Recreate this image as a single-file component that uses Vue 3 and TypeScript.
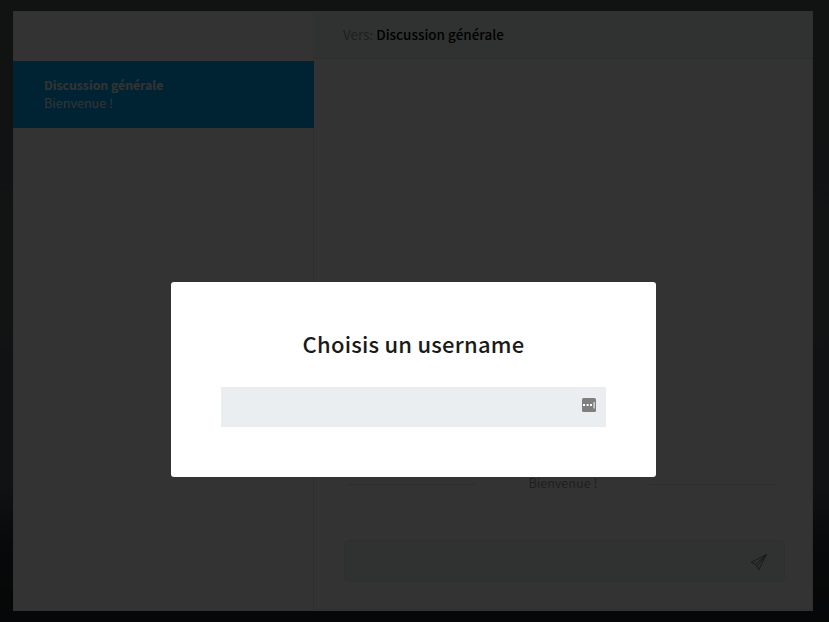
<script setup lang="ts">
import { ref } from 'vue'

interface Room {
  name: string
  preview: string
}

const rooms: Room[] = [{ name: 'Discussion générale', preview: 'Bienvenue !' }]
const active = ref<Room>(rooms[0])
const username = ref<string>('')
const message = ref<string>('')
</script>

<template>
  <div class="page">
    <main class="chat">
      <aside class="sidebar">
        <div v-for="room in rooms" :key="room.name" class="room">
          <strong class="room-name">{{ room.name }}</strong>
          <span class="room-preview">{{ room.preview }}</span>
        </div>
      </aside>
      <section class="conversation">
        <header class="top">
          <span>Vers:&nbsp;</span><b>{{ active.name }}</b>
        </header>
        <div class="messages">
          <div class="notice"><i></i><span>Bienvenue !</span><i></i></div>
        </div>
        <form class="write" @submit.prevent>
          <input v-model="message" type="text" />
          <svg class="send" viewBox="0 0 18 18">
            <path d="M16.4 1.6 1.2 9.4l4.3 2 3.2 5.4zM16.4 1.6 5.5 11.4M16.4 1.6 7 13.2" />
          </svg>
        </form>
      </section>
    </main>
    <div class="overlay">
      <form class="modal" @submit.prevent>
        <h1>Choisis un username</h1>
        <div class="field">
          <input v-model="username" type="text" />
          <svg class="key" viewBox="0 0 14 14">
            <rect width="14" height="14" rx="1.5" fill="#7f7f7f" />
            <path d="M1 6h2v2H1zM4.6 6h2v2h-2zM8 6h2v2H8zM11.6 4h1v6.5h-1z" fill="#fff" />
          </svg>
        </div>
      </form>
    </div>
  </div>
</template>

<style>
body {
  overflow: hidden;
  background: #000;
}
</style>

<style scoped>
* {
  box-sizing: border-box;
}
.page {
  width: 829px;
  height: 622px;
  padding: 11px 16px 11px 13px;
  background: linear-gradient(#555a5c 0%, #5a5f5f 45%, #555a60 78%, #282d30 88%, #202327 100%);
  font-family: 'Noto Sans CJK SC', 'Noto Sans', sans-serif;
  font-size: 12.6px;
  line-height: 18px;
}
.chat {
  display: flex;
  width: 800px;
  height: 600px;
  background: #fff;
}
.sidebar {
  width: 301px;
  padding-top: 49px;
  border: solid #f0f4f3;
  border-width: 1px 0 0 1px;
}
.room {
  position: relative;
  z-index: 1;
  display: flex;
  flex-direction: column;
  height: 67px;
  margin-left: -1px;
  padding: 15px 0 0 31px;
  background: #00b0ff;
  color: #fff;
}
.room-name {
  font-size: 12.25px;
  font-weight: 700;
}
.conversation {
  display: flex;
  flex: 1;
  flex-direction: column;
  height: 599px;
  margin-left: -1px;
  border: solid #e6eae9;
  border-width: 0 1px 1px;
}
.top {
  display: flex;
  height: 48px;
  padding: 14px 0 0 29px;
  border-bottom: 1px solid #e0e8e6;
  background: #eefaf6;
  color: #999;
  font-size: 13.5px;
}
.top b {
  color: #000;
  font-weight: 500;
}
.messages {
  display: flex;
  flex: 1;
  flex-direction: column;
  justify-content: flex-end;
  padding: 0 35px 47px;
}
.notice {
  display: flex;
  align-items: center;
  justify-content: space-between;
  color: #999;
}
.notice span {
  margin-top: -1px;
  margin-bottom: 1px;
}
.notice i {
  width: 128px;
  height: 1px;
  background: #e6e6e6;
}
.write {
  display: flex;
  align-items: center;
  height: 42px;
  margin: 0 27px 27px 30px;
  padding: 1px 16px 0 0;
  border: 1px solid #e6eeeb;
  border-radius: 5px;
  background: #eefaf6;
}
input {
  flex: 1;
  min-width: 0;
  border: 0;
  outline: 0;
  background: transparent;
  font: inherit;
}
.send {
  width: 18px;
  height: 18px;
  fill: none;
  stroke: #777;
  stroke-width: 1;
  stroke-linejoin: round;
}
.overlay {
  position: fixed;
  z-index: 2;
  inset: 0;
  display: flex;
  align-items: flex-start;
  padding: 282px 0 0 171px;
  background: rgba(0, 0, 0, 0.8);
}
.modal {
  width: 485px;
  height: 195px;
  padding: 43px 50px 50px;
  border-radius: 3px;
  background: #fff;
}
h1 {
  margin: 0 0 26px;
  color: #1a1a1a;
  font-size: 22px;
  font-weight: 500;
  letter-spacing: 0.22px;
  line-height: 36px;
  text-align: center;
}
.field {
  display: flex;
  height: 40px;
  padding: 11px 10px 0 12px;
  background: #eaeef1;
}
.key {
  width: 14px;
  height: 14px;
}
</style>
